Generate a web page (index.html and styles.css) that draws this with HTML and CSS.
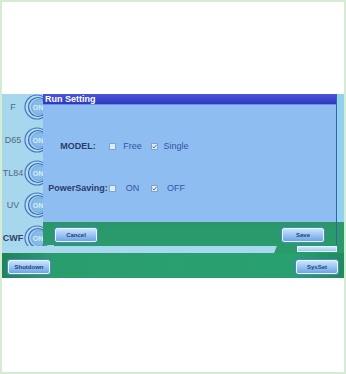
FILE: index.html
```html
<!DOCTYPE html>
<html>
<head>
<meta charset="utf-8">
<link rel="stylesheet" href="styles.css">
</head>
<body>
<div class="frame">
  <div class="screen">
    <div class="upper">
      <div class="lamps">
        <div class="lamp"><span class="lamp-label">F</span><svg class="on-btn" viewBox="0 0 26 26"><circle cx="13" cy="13" r="12" class="ring-outer"/><circle cx="14" cy="13" r="9.5" class="ring-mid"/><circle cx="15" cy="13" r="7.5" class="ring-inner"/><text x="14" y="15.5" class="on-text">ON</text></svg></div>
        <div class="lamp"><span class="lamp-label">D65</span><svg class="on-btn" viewBox="0 0 26 26"><circle cx="13" cy="13" r="12" class="ring-outer"/><circle cx="14" cy="13" r="9.5" class="ring-mid"/><circle cx="15" cy="13" r="7.5" class="ring-inner"/><text x="14" y="15.5" class="on-text">ON</text></svg></div>
        <div class="lamp"><span class="lamp-label">TL84</span><svg class="on-btn" viewBox="0 0 26 26"><circle cx="13" cy="13" r="12" class="ring-outer"/><circle cx="14" cy="13" r="9.5" class="ring-mid"/><circle cx="15" cy="13" r="7.5" class="ring-inner"/><text x="14" y="15.5" class="on-text">ON</text></svg></div>
        <div class="lamp"><span class="lamp-label">UV</span><svg class="on-btn" viewBox="0 0 26 26"><circle cx="13" cy="13" r="12" class="ring-outer"/><circle cx="14" cy="13" r="9.5" class="ring-mid"/><circle cx="15" cy="13" r="7.5" class="ring-inner"/><text x="14" y="15.5" class="on-text">ON</text></svg></div>
        <div class="lamp"><span class="lamp-label dark">CWF</span><svg class="on-btn" viewBox="0 0 26 26"><circle cx="13" cy="13" r="12" class="ring-outer"/><circle cx="14" cy="13" r="9.5" class="ring-mid"/><circle cx="15" cy="13" r="7.5" class="ring-inner"/><text x="14" y="15.5" class="on-text">ON</text></svg></div>
      </div>
      <div class="rest"></div>
    </div>
    <div class="strip">
      <div class="slant-bar"></div>
      <div class="hidden-btn"></div>
    </div>
    <div class="bottom">
      <button class="btn">Shutdown</button>
      <button class="btn">SysSet</button>
    </div>

    <div class="dialog">
      <div class="dlg-title">Run Setting</div>
      <div class="dlg-body">
        <div class="row">
          <span class="label">MODEL:</span>
          <svg class="cb" viewBox="0 0 7 7"><rect x="0.5" y="0.5" width="6" height="6" class="cb-box"/></svg>
          <span class="opt">Free</span>
          <svg class="cb" viewBox="0 0 7 7"><rect x="0.5" y="0.5" width="6" height="6" class="cb-box"/><path d="M1.6 3.6 L3 5 L5.6 1.8" class="cb-check"/></svg>
          <span class="opt">Single</span>
        </div>
        <div class="row">
          <span class="label">PowerSaving:</span>
          <svg class="cb" viewBox="0 0 7 7"><rect x="0.5" y="0.5" width="6" height="6" class="cb-box"/></svg>
          <span class="opt">ON</span>
          <svg class="cb" viewBox="0 0 7 7"><rect x="0.5" y="0.5" width="6" height="6" class="cb-box"/><path d="M1.6 3.6 L3 5 L5.6 1.8" class="cb-check"/></svg>
          <span class="opt">OFF</span>
        </div>
      </div>
      <div class="dlg-foot">
        <button class="btn">Cancel</button>
        <button class="btn">Save</button>
      </div>
    </div>
  </div>
</div>
</body>
</html>
```
FILE: styles.css
```css
* { box-sizing: border-box; }
html, body { margin: 0; padding: 0; background: #ffffff; }
body { font-family: "Liberation Sans", Arial, sans-serif; }

.frame {
  width: 346px;
  height: 374px;
  border: 2px solid #d3ecd3;
  padding-top: 92px;
  background: #ffffff;
}

.screen {
  position: relative;
  width: 342px;
  height: 184px;
  background: #a5d7ef;
  display: flex;
  flex-direction: column;
  overflow: hidden;
}

.upper {
  display: flex;
  height: 152px;
}

.lamps {
  width: 52px;
  display: flex;
  flex-direction: column;
  gap: 6.75px;
  background: #a7d7ed;
}

.lamp {
  height: 26px;
  display: flex;
  align-items: center;
}

.lamp-label {
  width: 22px;
  text-align: center;
  font-size: 9px;
  color: #55687e;
}
.lamp-label.dark { color: #2f3f66; font-weight: bold; }

.on-btn { width: 26px; height: 26px; display: block; }
.ring-outer { fill: #b3dcf3; stroke: #4676c0; stroke-width: 1.2; }
.ring-mid { fill: #a2d0f0; stroke: #3a69b6; stroke-width: 1.2; }
.ring-inner { fill: #86bbe8; stroke: #6b9fd8; stroke-width: 0.8; }
.on-text { font-family: "Liberation Sans", Arial, sans-serif; font-size: 7px; font-weight: bold; fill: #d6ecfb; text-anchor: middle; }

.rest {
  flex: 1;
  background: linear-gradient(to bottom, #8fd1ef 0, #8fd1ef 128px, #2a9a6b 128px);
}

.strip {
  height: 7px;
  display: flex;
  align-items: flex-end;
  background: #2a9a6b;
}
.slant-bar {
  width: 275px;
  height: 7px;
  background: #a9d9f1;
  clip-path: polygon(0 0, 100% 0, calc(100% - 3px) 100%, 0 100%);
}
.hidden-btn {
  margin-left: auto;
  margin-right: 7px;
  width: 40px;
  height: 6px;
  margin-bottom: 1px;
  background: linear-gradient(to bottom, #cde9fb, #9ccaf0);
  border: 1px solid #e4f4ff;
}

.bottom {
  flex: 1;
  display: flex;
  justify-content: space-between;
  align-items: flex-start;
  padding: 7px 6px 0 6px;
  background: linear-gradient(to right, #1f8458 0, #2a9d6d 15%, #29a070 85%, #1f8a5c 100%);
}

.btn {
  width: 42px;
  height: 14px;
  padding: 0;
  border: 1px solid #e6f4ff;
  border-radius: 2px;
  background: linear-gradient(to bottom, #c9e4fb 0, #9cc8f2 45%, #6ea4e6 100%);
  box-shadow: 0 0 0 1px #4f86c6;
  font-family: "Liberation Sans", Arial, sans-serif;
  font-size: 6px;
  font-weight: bold;
  color: #27407e;
  line-height: 12px;
}

.dialog {
  position: absolute;
  left: 41px;
  top: 0;
  width: 294px;
  height: 151px;
  display: flex;
  flex-direction: column;
  border-right: 1px solid #3d5fa8;
  background: #8dbdf0;
}

.dlg-title {
  height: 11px;
  padding-left: 2px;
  background: linear-gradient(to bottom, #4a55d8, #2d38c2);
  color: #ffffff;
  font-size: 9px;
  font-weight: bold;
  line-height: 10px;
  border-bottom: 1px solid #6f8ee0;
}

.dlg-body {
  flex: 1;
  padding: 35px 0 0 5px;
  display: flex;
  flex-direction: column;
  gap: 30px;
  background: #8ebef1;
}

.row {
  height: 12px;
  display: grid;
  grid-template-columns: 60px 6px 37px 6px 38px;
  column-gap: 0;
  align-items: center;
}
.row .cb:first-of-type { margin-left: 1px; }

.label {
  text-align: center;
  font-size: 9px;
  font-weight: bold;
  color: #2b3b6c;
  white-space: nowrap;
}
.opt {
  text-align: center;
  font-size: 9px;
  color: #3553a8;
}
.cb { width: 7px; height: 7px; display: block; }
.cb-box { fill: #d9edfd; stroke: #8aa2c2; stroke-width: 1; }
.cb-check { fill: none; stroke: #5872a6; stroke-width: 1; }

.dlg-foot {
  height: 23px;
  display: flex;
  justify-content: space-between;
  align-items: flex-start;
  padding: 6px 12px 0 12px;
  background: linear-gradient(to bottom, #2a976a, #2a9b6c);
}
```
